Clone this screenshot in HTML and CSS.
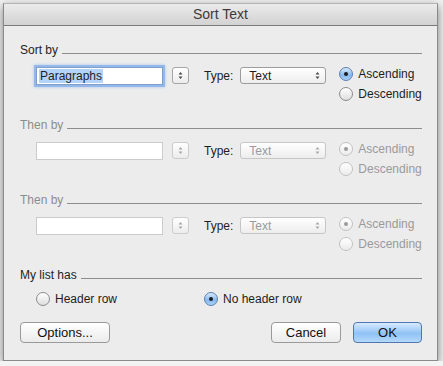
FILE: index.html
```html
<!DOCTYPE html>
<html lang="en">
<head>
    <meta charset="UTF-8">
    <meta name="viewport" content="width=device-width, initial-scale=1.0">
    <title>Sort Text</title>
    <link rel="stylesheet" href="styles.css">
</head>
<body>
    <div class="window">
        <div class="titlebar">Sort Text</div>

        <div class="content">
            <section class="group">
                <div class="group-head"><span>Sort by</span><i class="rule"></i></div>
                <div class="sort-row">
                    <div class="field focused"><span class="sel">Paragraphs</span></div>
                    <div class="stepper">
                        <svg width="7" height="9" viewBox="0 0 7 9"><path d="M1.5 3.5 L3.5 1 L5.5 3.5 Z M1.5 5.5 L3.5 8 L5.5 5.5 Z"/></svg>
                    </div>
                    <span class="type-label">Type:</span>
                    <div class="popup">
                        <span>Text</span>
                        <svg width="7" height="9" viewBox="0 0 7 9"><path d="M1.5 3.5 L3.5 1 L5.5 3.5 Z M1.5 5.5 L3.5 8 L5.5 5.5 Z"/></svg>
                    </div>
                    <div class="radios">
                        <label class="radio checked"><span class="dot"></span>Ascending</label>
                        <label class="radio"><span class="dot"></span>Descending</label>
                    </div>
                </div>
            </section>

            <section class="group disabled">
                <div class="group-head"><span>Then by</span><i class="rule"></i></div>
                <div class="sort-row">
                    <div class="field"></div>
                    <div class="stepper">
                        <svg width="7" height="9" viewBox="0 0 7 9"><path d="M1.5 3.5 L3.5 1 L5.5 3.5 Z M1.5 5.5 L3.5 8 L5.5 5.5 Z"/></svg>
                    </div>
                    <span class="type-label">Type:</span>
                    <div class="popup">
                        <span>Text</span>
                        <svg width="7" height="9" viewBox="0 0 7 9"><path d="M1.5 3.5 L3.5 1 L5.5 3.5 Z M1.5 5.5 L3.5 8 L5.5 5.5 Z"/></svg>
                    </div>
                    <div class="radios">
                        <label class="radio checked"><span class="dot"></span>Ascending</label>
                        <label class="radio"><span class="dot"></span>Descending</label>
                    </div>
                </div>
            </section>

            <section class="group disabled">
                <div class="group-head"><span>Then by</span><i class="rule"></i></div>
                <div class="sort-row">
                    <div class="field"></div>
                    <div class="stepper">
                        <svg width="7" height="9" viewBox="0 0 7 9"><path d="M1.5 3.5 L3.5 1 L5.5 3.5 Z M1.5 5.5 L3.5 8 L5.5 5.5 Z"/></svg>
                    </div>
                    <span class="type-label">Type:</span>
                    <div class="popup">
                        <span>Text</span>
                        <svg width="7" height="9" viewBox="0 0 7 9"><path d="M1.5 3.5 L3.5 1 L5.5 3.5 Z M1.5 5.5 L3.5 8 L5.5 5.5 Z"/></svg>
                    </div>
                    <div class="radios">
                        <label class="radio checked"><span class="dot"></span>Ascending</label>
                        <label class="radio"><span class="dot"></span>Descending</label>
                    </div>
                </div>
            </section>

            <section class="group">
                <div class="group-head"><span>My list has</span><i class="rule"></i></div>
                <div class="list-row">
                    <label class="radio header-opt"><span class="dot"></span>Header row</label>
                    <label class="radio checked"><span class="dot"></span>No header row</label>
                </div>
            </section>

            <div class="buttons">
                <button class="btn options">Options...</button>
                <button class="btn cancel">Cancel</button>
                <button class="btn ok">OK</button>
            </div>
        </div>
    </div>
</body>
</html>
```

FILE: styles.css
```css
:root {
    --window-bg: #ececec;
    --text-color: #1e1e1e;
    --muted: #8c8c8c;
    --rule: #8e8e8e;
}

* {
    margin: 0;
    padding: 0;
    box-sizing: border-box;
}

body {
    padding: 3px 0 0 3px;
    background-color: #f3f3f3;
    font-family: "Liberation Sans", Arial, sans-serif;
    font-size: 12px;
    color: var(--text-color);
}

.window {
    width: 435px;
    background-color: var(--window-bg);
    border: 1px solid #8a8a8a;
    border-top-color: #b4b4b4;
    box-shadow: 0 3px 9px rgba(0, 0, 0, 0.5);
}

.titlebar {
    height: 22px;
    line-height: 21px;
    text-align: center;
    font-size: 14px;
    color: #3a3a3a;
    background: linear-gradient(#ebebeb, #d2d2d2);
    border-bottom: 1px solid #7a7a7a;
}

.content {
    padding: 17px 15px 17px 16px;
}

.group + .group {
    margin-top: 14px;
}

.group-head {
    display: flex;
    align-items: flex-end;
    height: 14px;
    line-height: 14px;
}

.rule {
    flex: 1;
    height: 1px;
    margin: 0 0 3px 4px;
    background-color: var(--rule);
}

.sort-row {
    display: flex;
    align-items: flex-start;
    margin-top: 7px;
    padding-left: 16px;
}

.field {
    width: 127px;
    height: 18px;
    margin-top: 3px;
    padding-left: 2px;
    line-height: 16px;
    background-color: #fff;
    border: 1px solid #a9a9a9;
    border-top-color: #8c8c8c;
}

.field.focused {
    border-color: #7f9fcc;
    box-shadow: 0 0 0 2px #93b8ea, 0 0 3px 2px #a9c8f0;
}

.sel {
    background-color: #b4d3fa;
    padding: 0 1px;
}

.stepper {
    width: 17px;
    height: 17px;
    margin: 3px 0 0 9px;
    display: flex;
    align-items: center;
    justify-content: center;
    border: 1px solid #a6a6a6;
    border-radius: 3px;
    background: linear-gradient(#ffffff, #ececec);
}

.stepper svg,
.popup svg {
    fill: #4a4a4a;
}

.type-label {
    margin: 3px 0 0 15px;
    line-height: 18px;
}

.popup {
    width: 86px;
    height: 17px;
    margin: 3px 0 0 7px;
    padding: 0 4px 0 8px;
    display: flex;
    align-items: center;
    justify-content: space-between;
    border: 1px solid #9c9c9c;
    border-radius: 3px;
    background: linear-gradient(#ffffff, #ededed);
}

.radios {
    margin-left: 13px;
}

.radio {
    display: flex;
    align-items: center;
    gap: 5px;
    height: 20px;
}

.dot {
    position: relative;
    width: 14px;
    height: 14px;
    border-radius: 50%;
    border: 1px solid #8c8c8c;
    background: linear-gradient(#ffffff, #dedede);
}

.radio.checked .dot {
    border-color: #5b7fae;
    background: linear-gradient(#d7e9fc, #86b9f0 60%, #a9d0f7);
}

.radio.checked .dot::after {
    content: "";
    position: absolute;
    top: 4px;
    left: 4px;
    width: 4px;
    height: 4px;
    border-radius: 50%;
    background-color: #1c1c1c;
}

.list-row {
    display: flex;
    margin-top: 7px;
    padding-left: 16px;
}

.header-opt {
    width: 168px;
}

/* Disabled groups */
.disabled .group-head span {
    color: var(--muted);
}

.disabled .field {
    border-color: #cbcbcb;
}

.disabled .stepper {
    border-color: #cccccc;
}

.disabled .stepper svg,
.disabled .popup svg {
    fill: #a8a8a8;
}

.disabled .popup {
    border-color: #c6c6c6;
    color: #9a9a9a;
}

.disabled .radio {
    color: #9a9a9a;
}

.disabled .dot,
.disabled .radio.checked .dot {
    border-color: #c2c2c2;
    background: linear-gradient(#ffffff, #ebebeb);
}

.disabled .radio.checked .dot::after {
    background-color: #9a9a9a;
}

.buttons {
    display: flex;
    margin-top: 13px;
}

.btn {
    height: 21px;
    font-family: "Liberation Sans", Arial, sans-serif;
    font-size: 13px;
    color: #111;
    border: 1px solid #9a9a9a;
    border-radius: 4px;
    background: linear-gradient(#ffffff, #ebebeb);
}

.options {
    width: 90px;
}

.cancel {
    width: 70px;
    margin-left: auto;
}

.ok {
    width: 69px;
    margin-left: 12px;
    border-color: #5177b0;
    background: linear-gradient(#d8eafd, #8fc2f5 55%, #b4d9fa);
}
```
